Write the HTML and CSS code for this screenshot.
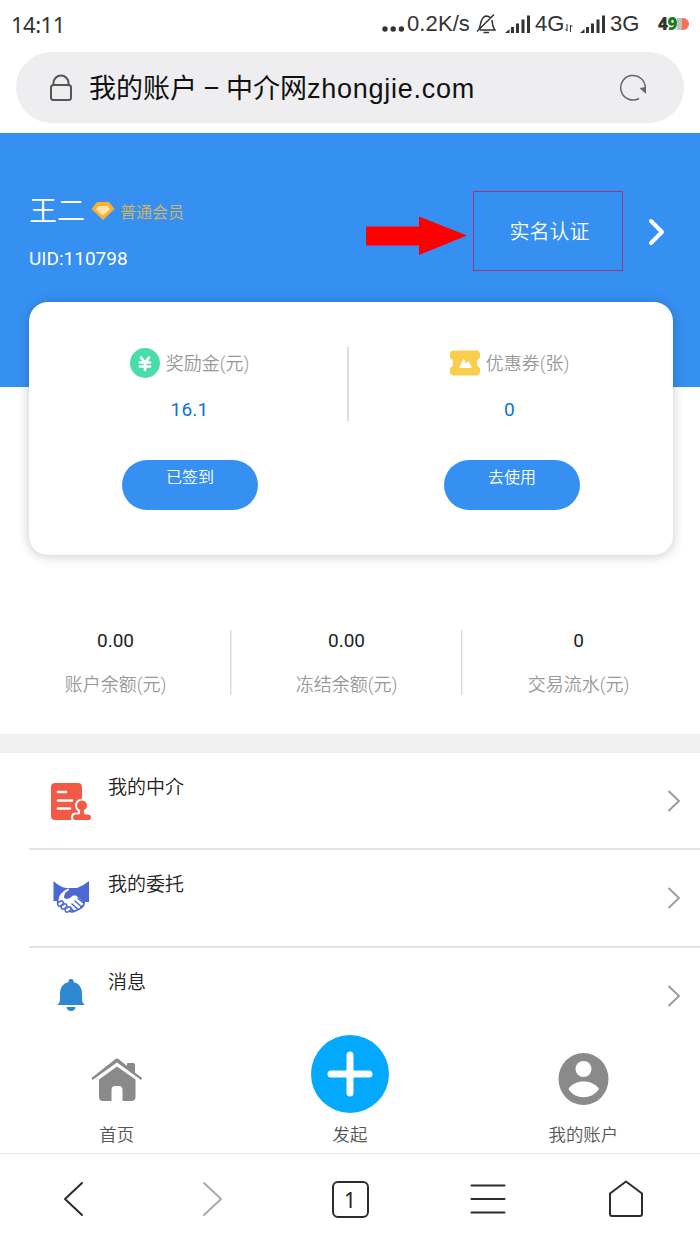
FILE: index.html
```html
<!DOCTYPE html>
<html lang="zh-CN">
<head>
<meta charset="utf-8">
<title>我的账户</title>
<link rel="stylesheet" href="styles.css">
</head>
<body>
<header class="status">
  <span class="time">14:11</span>
  <div class="status-right">
    <svg class="dots" width="23" height="6" viewBox="0 0 23 6" fill="#333"><circle cx="3" cy="3" r="2.7"/><circle cx="11.200" cy="3" r="2.700"/><circle cx="19.400" cy="3" r="2.700"/></svg>
    <span class="speed">0.2K/s</span>
    <svg class="mute" width="20" height="22" viewBox="0 0 20 22" fill="none" stroke="#333" stroke-width="1.500"><path d="M3 16C5 13 4 4 10 3Q13 3 14.500 5M16 7C16.500 12 16.500 14 19 17H4M1 18.500L18 1.500M7.500 19.500H13"/></svg>
    <svg class="signal" width="26" height="19" viewBox="0 0 26 19" fill="#333"><path d="M0 18L4.500 14V18zM6 12h3v6H6zM11 8.500h3V18h-3zM16.500 4.500h3V18h-3zM22 .500h3V18h-3z"/></svg>
    <span class="net net-a">4G</span>
    <svg class="updown" width="8" height="8" viewBox="0 0 8 8" fill="none" stroke="#333"><path d="M2 0V7M.500 5L2 7M5.500 8V1L7.500 3"/></svg>
    <svg class="signal" width="26" height="19" viewBox="0 0 26 19" fill="#333"><path d="M0 18L4.500 14V18zM6 12h3v6H6zM11 8.500h3V18h-3zM16.500 4.500h3V18h-3zM22 .500h3V18h-3z"/></svg>
    <span class="net net-b">3G</span>
    <span class="battery"><b>4</b><b class="low">9</b><svg width="12" height="12" viewBox="0 0 12 12"><path fill="#c5bfb4" d="M0 0h6v12H0z"/><path fill="#f27253" d="M5 0h1a6 6 0 0 1 0 12H5z"/></svg></span>
  </div>
</header>
<div class="address">
  <svg class="lock" width="24" height="28" viewBox="0 0 24 28" fill="none" stroke="#555" stroke-width="2"><rect x="2" y="11" width="20" height="15" rx="2.500"/><path d="M4.500 11V9a7.500 7.500 0 0 1 15 0v2"/></svg>
  <span class="title">我的账户<span class="dash">–</span>中介网<span class="domain">zhongjie.com</span></span>
  <svg class="reload" width="28" height="28" viewBox="0 0 28 28" fill="none" stroke="#666" stroke-width="1.500"><path d="M20 24.500A12.300 12.300 0 1 1 26.300 14"/><path d="M20.500 14L27 13V20z" fill="#666" stroke="none"/></svg>
</div>
<section class="profile">
  <div class="who">
    <div class="name-row">
      <span class="name">王二</span>
      <svg width="24" height="20" viewBox="0 0 24 20"><path d="M6 1h12l5.500 7L12 19 .500 8z" fill="#fbb12f"/><path d="M7.500 5h9L19 8.500 12 14.500 5 8.500z" fill="#ffe3ad"/></svg>
      <span class="level">普通会员</span>
    </div>
    <div class="uid">UID:110798</div>
  </div>
  <svg class="arrow" width="102" height="40" viewBox="0 0 102 40"><path d="M0 10.500H53V.500L101 19.500 53 39V29.500H0z" fill="#f00"/></svg>
  <a class="verify">实名认证</a>
  <svg class="go" width="18" height="28" viewBox="0 0 18 28" fill="none" stroke="#fff" stroke-width="4" stroke-linecap="round" stroke-linejoin="round"><path d="M3 3L14 14 3 25"/></svg>
</section>
<section class="card">
  <div class="asset">
    <div class="asset-info">
      <div class="asset-label">
        <svg width="30" height="30" viewBox="0 0 30 30"><circle cx="15" cy="15" r="15" fill="#4bdcae"/><path d="M11 9.500L15 14.500 19 9.500M10 14.500H20M10 18.500H20M15 14.500V22" fill="none" stroke="#fff" stroke-width="2.700" stroke-linecap="round"/></svg>
        <span>奖励金(元)</span>
      </div>
      <div class="amount">16.1</div>
    </div>
    <button class="pill">已签到</button>
  </div>
  <div class="asset">
    <div class="asset-info">
      <div class="asset-label">
        <svg width="30" height="30" viewBox="0 0 30 30"><path d="M4 2.500H26Q30 2.500 30 6.500V10Q27 11 27 15T30 20V23.500Q30 27.500 26 27.500H4Q0 27.500 0 23.500V20Q3 19 3 15T0 10V6.500Q0 2.500 4 2.500z" fill="#facd4c"/><path d="M9 20L13.500 10.500 16.500 15.500 18.500 13 22 20z" fill="#fff"/></svg>
        <span>优惠券(张)</span>
      </div>
      <div class="amount">0</div>
    </div>
    <button class="pill">去使用</button>
  </div>
</section>
<section class="stats">
  <div class="stat"><span class="value">0.00</span><span class="caption">账户余额(元)</span></div>
  <div class="stat"><span class="value">0.00</span><span class="caption">冻结余额(元)</span></div>
  <div class="stat"><span class="value">0</span><span class="caption">交易流水(元)</span></div>
</section>
<nav class="menu">
  <a class="row">
    <svg class="row-icon" width="44" height="44" viewBox="0 0 44 44"><path d="M6 4H29Q33 4 33 8V41H6Q2 41 2 37V8Q2 4 6 4z" fill="#f35a45"/><path d="M9 13H17M9 21.500H23M9 29.500H21" stroke="#fff" stroke-width="2.600" stroke-linecap="round"/><path d="M31 31A5 5 0 1 1 35 31Q34.500 35 36 35.500H39Q42 35.500 42 38.500Q42 41 40 41H26Q24 41 24 38.500Q24 35.500 27 35.500H30Q31.500 35 31 31z" fill="#f35a45" stroke="#fff" stroke-width="4" stroke-linejoin="round" paint-order="stroke"/></svg>
    <span>我的中介</span><svg class="chev" width="14" height="24" viewBox="0 0 14 24"><path d="M1.500 2L12 12 1.500 22"/></svg>
  </a>
  <a class="row">
    <svg class="row-icon" width="44" height="44" viewBox="0 0 44 44"><path d="M4.500 5Q11 11 17 12H28Q34 10 40 5V26H36Q36 31 32 33L26 36Q22 38 18 35L10 30Q7 28 8 25L4.500 25z" fill="#4c69d3"/><path d="M9.500 24Q10 17 19 12.500Q22 13 17 16Q13.500 21 16 22.500Q20 24 24 19.500L27 19.500 34 26Q35 29 31.500 30Q31 33 28 32.500Q27 35 23.500 34L20 35 11 28z" fill="#fff"/><g fill="none" stroke="#4c69d3" stroke-width="1.500" stroke-linecap="round"><path d="M26 25L31.500 30M23 28L28 32.500M21 31L24 34.500M29 22.500L34.500 27"/><rect x="8.500" y="25.500" width="6" height="4" rx="2" transform="rotate(-35 11.500 27.500)" fill="#fff"/><rect x="12" y="28.500" width="6" height="4" rx="2" transform="rotate(-35 15 30.500)" fill="#fff"/><rect x="16" y="31.500" width="6" height="4" rx="2" transform="rotate(-35 19 33.500)" fill="#fff"/></g></svg>
    <span>我的委托</span><svg class="chev" width="14" height="24" viewBox="0 0 14 24"><path d="M1.500 2L12 12 1.500 22"/></svg>
  </a>
  <a class="row">
    <svg class="row-icon" width="44" height="44" viewBox="0 0 44 44" fill="#2d87d1"><path d="M19.500 8Q19 5 22 5T24.500 8Q33 10 33 20V25Q33 29 36 31H8Q11 29 11 25V20Q11 10 19.500 8zM17.500 33H26.500Q26 37 22 37T17.500 33z"/></svg>
    <span>消息</span><svg class="chev" width="14" height="24" viewBox="0 0 14 24"><path d="M1.500 2L12 12 1.500 22"/></svg>
  </a>
</nav>
<nav class="tabs">
  <a class="tab"><svg width="80" height="80" viewBox="0 0 80 80" fill="#8a8a8a"><path d="M14.500 43L38.500 24Q40 22.800 41.500 24L50 31V29Q50 28 51 28H56.500Q58 28 58 29.500V37.500L65 43 64 45 40 27.500 15.500 45z"/><path d="M22 44.500L40 31.500 58.500 44.500V62Q58.500 66 54.500 66H45.500V55Q45.500 51 42 51H38Q34.500 51 34.500 55V66H26Q22 66 22 62z"/></svg><span>首页</span></a>
  <a class="tab"><svg width="80" height="80" viewBox="0 0 80 80"><circle cx="40" cy="39" r="39" fill="#03a9ff"/><path d="M40 20V58M21 39H59" stroke="#fff" stroke-width="7" stroke-linecap="round"/></svg><span>发起</span></a>
  <a class="tab"><svg width="80" height="80" viewBox="0 0 80 80"><ellipse cx="40.500" cy="44" rx="25" ry="26" fill="#8a8a8a"/><circle cx="40.500" cy="34" r="8" fill="#fff"/><path d="M25.500 54C31 44 50 44 56 54C49 65 32 65 25.500 54z" fill="#fff"/></svg><span>我的账户</span></a>
</nav>
<footer class="browser">
  <a><svg width="40" height="40" viewBox="0 0 40 40"><path d="M28 4L11 20 28 36"/></svg></a>
  <a class="off"><svg width="40" height="40" viewBox="0 0 40 40"><path d="M12 4L29 20 12 36"/></svg></a>
  <a><span class="count">1</span></a>
  <a><svg width="40" height="40" viewBox="0 0 40 40"><path d="M3.500 6.500H36.500M3.500 20H36.500M3.500 33.500H36.500"/></svg></a>
  <a><svg width="40" height="40" viewBox="0 0 40 40"><path d="M20 2.500L36 14.500V35Q36 37 34 37H6Q4 37 4 35V14.500z"/></svg></a>
</footer>
</body>
</html>
```

FILE: styles.css
```css
* { box-sizing: border-box; }
body {
  margin: 0;
  width: 700px;
  height: 1244px;
  overflow: hidden;
  background: #fff;
  color: #222;
  font-family: Roboto, "Noto Sans CJK SC", sans-serif;
  font-weight: 350;
  display: flex;
  flex-direction: column;
}
svg { display: block; flex: none; }
.status {
  height: 52px;
  padding: 0 12px 4px 11px;
  display: flex;
  justify-content: space-between;
  align-items: center;
  font: 400 22px/48px "Noto Sans", sans-serif;
  color: #333;
}
.time { letter-spacing: -.5px; }
.status-right { display: flex; align-items: center; font-family: "Liberation Sans", sans-serif; }
.dots { margin: 10px 2px 0 0; }
.speed { width: 64px; letter-spacing: .1px; }
.mute { margin: 0 9px 0 5px; }
.signal { margin-right: 4px; }
.net-a { width: 30px; }
.updown { margin: 8px 7px 0 0; }
.net-b { width: 48px; }
.battery { display: flex; align-items: center; font: 700 17px/48px "Open Sans", sans-serif; width: 30px; letter-spacing: -.5px; }
.low { color: #167b18; }
.address {
  height: 71px;
  margin: 0 16px 10px;
  padding: 0 37px 0 33px;
  border-radius: 36px;
  background: #eeeef0;
  display: flex;
  align-items: center;
  color: #111;
}
.title { flex: 1; margin-left: 16px; font-size: 27px; font-weight: 400; line-height: 40px; padding-top: 3px; white-space: nowrap; }
.dash { display: inline-block; width: 29px; text-align: center; }
.domain { font-family: "Liberation Sans", sans-serif; letter-spacing: .75px; }
.reload { margin-top: 0; }
.profile {
  flex: none;
  height: 254px;
  padding: 58px 34px 0 29px;
  background: #3690f2;
  color: #fff;
  display: flex;
  align-items: flex-start;
}
.who { width: 337px; }
.name-row { display: flex; align-items: center; height: 40px; }
.name { font-size: 28px; line-height: 40px; width: 62px; padding-top: 2px; }
.level { font-size: 16px; color: #d9b65c; margin-left: 5px; }
.uid { margin-top: 16px; font-size: 19px; line-height: 24px; font-weight: 400; }
.arrow { margin-top: 25px; }
.verify {
  width: 150px;
  height: 80px;
  margin-left: 5px;
  border: 1px solid #a1377a;
  text-align: center;
  font-size: 20px;
  line-height: 81px;
  padding-left: 3px;
}
.go { margin: 27px 0 0 25px; }
.card {
  flex: none;
  position: relative;
  width: 644px;
  height: 253px;
  margin: -85px 0 0 29px;
  padding-top: 45px;
  border-radius: 19px;
  background: #fff;
  box-shadow: 0 1px 12px rgba(0, 0, 0, .22);
  display: grid;
  grid-template-columns: 320px 324px;
}
.asset-info { height: 74px; }
.asset:first-child .asset-info { border-right: 2px solid #ddd; padding-left: 3px; }
.asset-label { display: flex; gap: 6px; height: 32px; align-items: center; justify-content: center; color: #999; font-size: 18px; line-height: 32px; }
.asset-label span { padding-top: 1px; }
.asset:last-child .asset-info { margin-right: 3px; }
.amount { margin-top: 18px; text-align: center; font-size: 19px; line-height: 26px; font-weight: 400; color: #0b74d8; letter-spacing: .2px; }
.pill {
  display: block;
  width: 136px;
  height: 50px;
  margin: 39px auto 0;
  padding: 0 0 15px;
  border: 0;
  border-radius: 25px;
  background: #3690f2;
  color: #fff;
  font: 350 16px/34px Roboto, "Noto Sans CJK SC", sans-serif;
}
.asset:first-child .pill { margin-left: 93px; }
.asset:last-child .pill { margin-left: 95px; }
.stats {
  flex: none;
  height: 198px;
  padding-top: 75px;
  border-bottom: 19px solid #f0f0f0;
  display: grid;
  grid-template-columns: 231px 231px 233px;
}
.stat { height: 65px; display: flex; flex-direction: column; align-items: center; }
.stat + .stat { box-shadow: -1px 0 #ddd, inset 1px 0 #eee; }
.value { font-size: 19px; line-height: 22px; font-weight: 400; }
.caption { margin-top: 20px; font-size: 18px; line-height: 26px; color: #999; }
.menu { flex: none; height: 267px; overflow: hidden; padding-left: 29px; }
.row { display: flex; height: 97.300px; border-bottom: 2px solid #e2e2e2; padding: 0 19px 0 20px; }
.row:last-child { border: 0; }
.row > span { flex: 1; font-size: 19px; line-height: 28px; margin: 21px 0 0 15px; }
.row-icon { margin-top: 26px; }
.chev { margin-top: 36px; fill: none; stroke: #999; stroke-width: 1.800; }
.tabs { flex: none; height: 134px; border-bottom: 1px solid #e8e8e8; padding-top: 15px; display: grid; grid-template-columns: repeat(3, 1fr); }
.tab { display: flex; flex-direction: column; align-items: center; font-size: 17.400px; line-height: 26px; color: #555; }
.tab span { margin-top: 7px; }
.browser { flex: 1; padding: 0 5px; display: grid; grid-template-columns: repeat(5, 1fr); align-items: center; justify-items: center; }
.browser svg { fill: none; stroke: #2c2c2c; stroke-width: 2; stroke-linecap: round; stroke-linejoin: round; }
.browser .off svg { stroke: #aaa; }
.count { display: block; width: 37px; height: 37px; border: 2px solid #2c2c2c; border-radius: 6px; text-align: center; font: 400 21px/34px "Noto Sans", sans-serif; }
```
